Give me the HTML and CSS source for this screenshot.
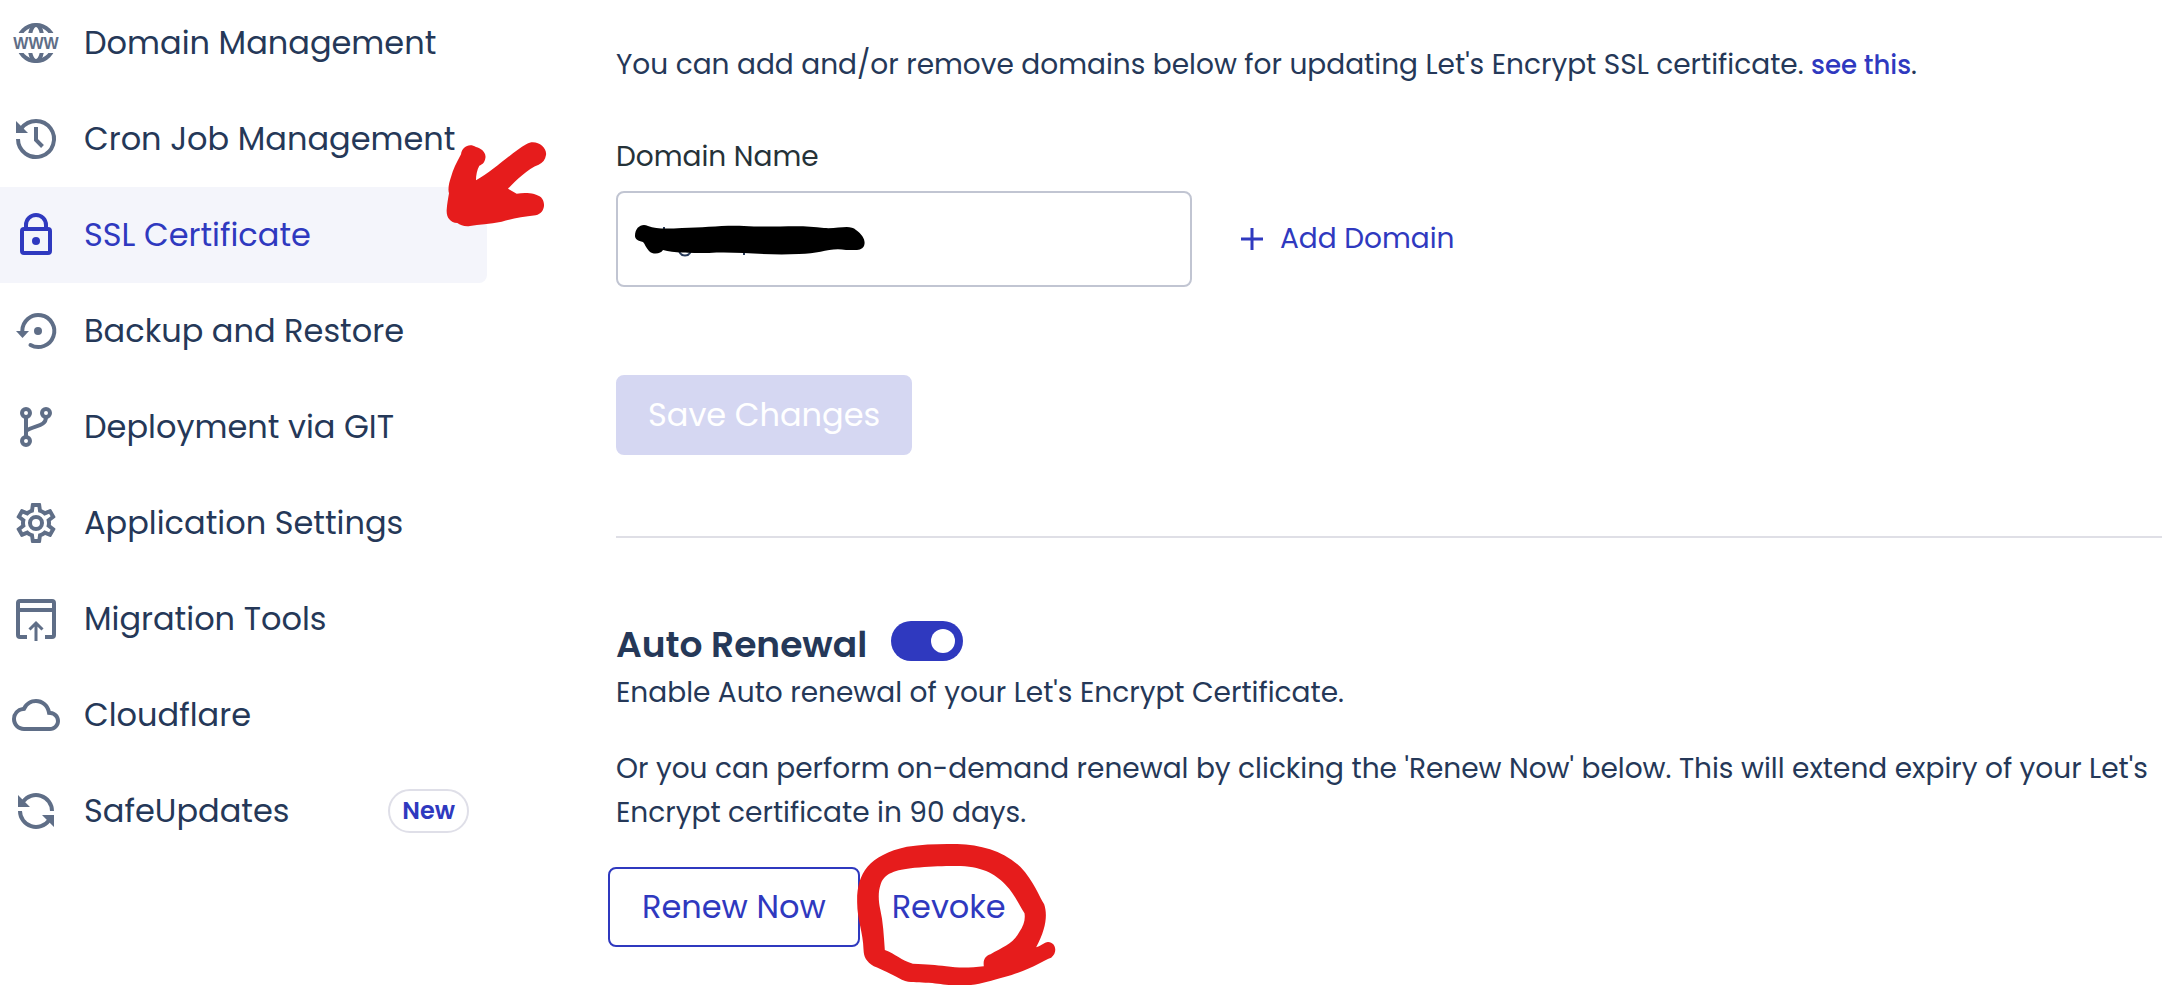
FILE: index.html
```html
<!DOCTYPE html>
<html lang="en">
<head>
<meta charset="utf-8">
<title>SSL Certificate</title>
<link rel="stylesheet" href="styles.css">
</head>
<body>
<div class="layout">
  <nav class="sidebar" aria-label="Application">
    <a class="item" href="#">
      <svg class="icon" viewBox="0 0 48 48" aria-hidden="true">
        <clipPath id="caps"><path d="M0 0H48V14H0ZM0 34H48V48H0Z"/></clipPath>
        <g clip-path="url(#caps)">
          <circle class="line" cx="24" cy="24" r="18"/>
          <ellipse class="line" cx="24" cy="24" rx="7" ry="18"/>
        </g>
        <text class="www" x="24" y="30" text-anchor="middle">WWW</text>
      </svg>
      <span>Domain Management</span>
    </a>
    <a class="item" href="#">
      <svg class="icon" viewBox="0 0 48 48" aria-hidden="true">
        <path class="line" d="M6 24A18 18 0 1 0 9.500 13.300"/>
        <path class="line" d="M24 12V25L30.500 31.500"/>
        <path class="solid" d="M4 6V18H16Z"/>
      </svg>
      <span>Cron Job Management</span>
    </a>
    <a class="item active" href="#" aria-current="page">
      <svg class="icon" viewBox="0 0 48 48" aria-hidden="true">
        <rect class="line" x="10" y="18" width="28" height="24" rx="2"/>
        <path class="line" d="M14 18V14A10 10 0 0 1 34 14V18"/>
        <circle class="solid" cx="24" cy="30" r="4"/>
      </svg>
      <span>SSL Certificate</span>
      <svg class="mark mark-arrow" viewBox="0 0 420 360" aria-hidden="true">
        <path d="M93 103C96 80 118 69 138 81C153 84 170 98 166 115C164 128 157 134 148 137C141 150 138 165 138 181C190 152 248 95 290 72C318 56 352 82 348 105C346 119 338 129 326 134C293 146 258 181 234 206L260 221C287 216 318 219 333 232C349 249 344 280 317 286C276 291 245 296 215 305C178 312 146 313 120 318C104 320 91 316 82 309C60 307 49 292 50 270C51 252 55 233 57 220C53 208 57 188 63 171C69 149 79 129 93 103Z"/>
      </svg>
    </a>
    <a class="item" href="#">
      <svg class="icon" viewBox="0 0 48 48" aria-hidden="true">
        <path class="line round" d="M10.300 25V24A16 16 0 1 1 18.500 38"/>
        <path class="solid" d="M4 24H17L10.500 31Z"/>
        <circle class="solid" cx="26" cy="24" r="4"/>
      </svg>
      <span>Backup and Restore</span>
    </a>
    <a class="item" href="#">
      <svg class="icon" viewBox="0 0 48 48" aria-hidden="true">
        <circle class="line" cx="14" cy="10" r="4"/>
        <circle class="line" cx="34" cy="10" r="4"/>
        <circle class="line" cx="14" cy="38" r="4"/>
        <path class="line" d="M14 14V34M34 14C34 24 22 22 14 28"/>
      </svg>
      <span>Deployment via GIT</span>
    </a>
    <a class="item" href="#">
      <svg class="icon" viewBox="0 0 24 24" aria-hidden="true">
        <path class="solid" d="M12,8A4,4 0 0,1 16,12A4,4 0 0,1 12,16A4,4 0 0,1 8,12A4,4 0 0,1 12,8M12,10A2,2 0 0,0 10,12A2,2 0 0,0 12,14A2,2 0 0,0 14,12A2,2 0 0,0 12,10M10,22C9.75,22 9.54,21.82 9.5,21.58L9.13,18.93C8.5,18.68 7.96,18.34 7.44,17.94L4.95,18.95C4.73,19.03 4.46,18.95 4.34,18.73L2.34,15.27C2.21,15.05 2.27,14.78 2.46,14.63L4.57,12.97L4.5,12L4.57,11L2.46,9.37C2.27,9.22 2.21,8.95 2.34,8.73L4.34,5.27C4.46,5.05 4.73,4.96 4.95,5.05L7.44,6.05C7.96,5.66 8.5,5.32 9.13,5.07L9.5,2.42C9.54,2.18 9.75,2 10,2H14C14.25,2 14.46,2.18 14.5,2.42L14.87,5.07C15.5,5.32 16.04,5.66 16.56,6.05L19.05,5.05C19.27,4.96 19.54,5.05 19.66,5.27L21.66,8.73C21.79,8.95 21.73,9.22 21.54,9.37L19.43,11L19.5,12L19.43,13L21.54,14.63C21.73,14.78 21.79,15.05 21.66,15.27L19.66,18.73C19.54,18.95 19.27,19.04 19.05,18.95L16.56,17.95C16.04,18.34 15.5,18.68 14.87,18.93L14.5,21.58C14.46,21.82 14.25,22 14,22H10M11.25,4L10.88,6.61C9.68,6.86 8.62,7.5 7.85,8.39L5.44,7.35L4.69,8.65L6.8,10.2C6.4,11.37 6.4,12.64 6.8,13.8L4.68,15.36L5.43,16.66L7.86,15.62C8.63,16.5 9.68,17.14 10.87,17.38L11.24,20H12.76L13.13,17.39C14.32,17.14 15.37,16.5 16.14,15.62L18.57,16.66L19.32,15.36L17.2,13.81C17.6,12.64 17.6,11.37 17.2,10.2L19.31,8.65L18.56,7.35L16.15,8.39C15.38,7.5 14.32,6.86 13.12,6.62L12.75,4H11.25Z"/>
      </svg>
      <span>Application Settings</span>
    </a>
    <a class="item" href="#">
      <svg class="icon" viewBox="0 0 48 48" aria-hidden="true">
        <path class="line" d="M15 42H8Q6 42 6 40V8Q6 6 8 6H40Q42 6 42 8V40Q42 42 40 42H33M6 15H42"/>
        <path class="line thin" d="M24 46V28M17.500 34.500L24 28L30.500 34.500"/>
      </svg>
      <span>Migration Tools</span>
    </a>
    <a class="item" href="#">
      <svg class="icon" viewBox="0 0 24 24" aria-hidden="true">
        <path class="solid" d="M19.35 10.04A7.49 7.49 0 0 0 12 4C9.11 4 6.6 5.64 5.35 8.04A5.994 5.994 0 0 0 0 14c0 3.31 2.69 6 6 6h13c2.76 0 5-2.24 5-5 0-2.64-2.05-4.78-4.65-4.96zM19 18H6c-2.21 0-4-1.79-4-4 0-2.05 1.53-3.76 3.56-3.97l1.07-.11.5-.95A5.469 5.469 0 0 1 12 6c2.62 0 4.88 1.86 5.39 4.43l.3 1.5 1.53.11A2.98 2.98 0 0 1 22 15c0 1.65-1.35 3-3 3z"/>
      </svg>
      <span>Cloudflare</span>
    </a>
    <a class="item" href="#">
      <svg class="icon" viewBox="0 0 48 48" aria-hidden="true">
        <path class="line" d="M40 24A16 16 0 0 0 11 14.700M8 24A16 16 0 0 0 37 33.300"/>
        <path class="solid" d="M6 8V20H18ZM42 40V28H30Z"/>
      </svg>
      <span>SafeUpdates</span>
      <span class="badge">New</span>
    </a>
  </nav>

  <main class="content">
    <p class="text">You can add and/or remove domains below for updating Let's Encrypt SSL certificate. <a class="link" href="#">see this</a>.</p>

    <form class="form">
      <label class="label" for="domain">Domain Name</label>
      <div class="row">
        <div class="field">
          <input class="input" id="domain" type="text">
          <svg class="mark mark-redact" viewBox="0 0 240 44" aria-hidden="true">
            <path class="glyph" d="M30 10V12M45 34C47 40 55 40 57 34M110 34V38"/>
            <path d="M1 19C1 10 8 6 14 9C22 12 32 12 48 11C70 11 88 8 110 9C140 11 165 7 190 11C205 12 216 7 222 13C229 18 232 24 230 29C227 34 222 33 212 33C196 30 186 37 165 37C130 39 104 34 75 36C54 36 40 36 29 33C27 37 19 38 15 34C12 31 11 27 9 25C4 24 1 22 1 19Z"/>
          </svg>
        </div>
        <button class="add" type="button">
          <svg class="plus" viewBox="0 0 24 24" aria-hidden="true"><path d="M12 1V23M1 12H23"/></svg>
          Add Domain
        </button>
      </div>
      <button class="btn save" type="submit" disabled>Save Changes</button>
    </form>

    <section class="renewal">
      <div class="heading">
        <h2 class="title" id="auto">Auto Renewal</h2>
        <input class="toggle" type="checkbox" role="switch" aria-labelledby="auto" checked>
      </div>
      <p class="text">Enable Auto renewal of your Let's Encrypt Certificate.</p>
      <p class="text ondemand">Or you can perform on-demand renewal by clicking the 'Renew Now' below. This will extend expiry of your Let's Encrypt certificate in 90 days.</p>
      <div class="actions">
        <button class="btn outline" type="button">Renew Now</button>
        <button class="btn plain" type="button">Revoke
          <svg class="mark mark-circle" viewBox="0 0 620 450" aria-hidden="true">
            <path d="M18 200C16 115 50 58 167 32C220 24 270 23 318 24C392 27 456 44 508 93C548 135 564 182 579 205C589 235 586 276 555 334C575 327 582 318 590 318C612 317 622 348 600 365C575 373 543 400 460 423C410 437 375 449 325 449C280 448 265 441 223 440C195 437 180 442 152 431C118 414 94 401 68 391C45 376 38 365 37 340C36 290 18 250 18 200ZM101 342C133 353 150 374 185 383C230 386 252 386 285 391C325 397 360 395 398 391C395 371 403 360 418 355C455 333 485 324 504 289C518 268 523 250 520 232C500 200 490 174 463 146C430 112 390 90 315 90C272 89 238 92 190 95C130 102 102 111 89 143C80 168 82 195 87 219C96 257 98 300 101 342Z"/>
          </svg>
        </button>
      </div>
    </section>
  </main>
</div>
</body>
</html>
```
FILE: styles.css
```css
* {
  box-sizing: border-box;
}

body {
  margin: 0;
  background: #fff;
  color: #253858;
  font-family: Poppins, Inter, "Open Sans", sans-serif;
  font-size: 28px;
  font-weight: 400;
  line-height: 44px;
  overflow-x: hidden;
}

.layout {
  display: grid;
  grid-template-columns: 487px minmax(0, 1fr);
  column-gap: 129px;
}

.sidebar {
  margin-top: -5px;
}

.item {
  position: relative;
  display: flex;
  align-items: center;
  gap: 24px;
  height: 96px;
  padding: 0 18px 0 12px;
  border-radius: 0 8px 8px 0;
  color: inherit;
  font-size: 32px;
  text-decoration: none;
}

.item.active {
  background: #f4f5fb;
  color: #2f39bf;
}

.icon {
  flex: none;
  width: 48px;
  height: 48px;
  color: #5f6e87;
  overflow: visible;
}

.active .icon {
  color: inherit;
}

.line {
  fill: none;
  stroke: currentColor;
  stroke-width: 4;
}

.line.thin {
  stroke-width: 3;
}

.line.round {
  stroke-linecap: round;
}

.solid {
  fill: currentColor;
}

.www {
  fill: currentColor;
  font: bold 16px "Liberation Sans", sans-serif;
}

.badge {
  margin-left: auto;
  padding: 0 12px;
  border: 2px solid #dfdfe8;
  border-radius: 22px;
  color: #2f39bf;
  font-size: 24px;
  font-weight: 600;
  line-height: 40px;
}

.content {
  padding: 43px 2px 38px 0;
}

.text {
  margin: 0;
}

.link {
  color: #2f39bf;
  font-size: 26px;
  font-weight: 500;
  text-decoration: none;
}

.form {
  padding-bottom: 81px;
  border-bottom: 2px solid #dfdfe6;
}

.label {
  display: block;
  margin-top: 48px;
  color: #263238;
}

.row {
  display: flex;
  align-items: center;
  gap: 48px;
  margin: 12px 0 88px;
}

.field {
  position: relative;
  flex: 0 1 576px;
}

.input {
  display: block;
  width: 100%;
  height: 96px;
  padding: 0 20px;
  border: 2px solid #c1c5d2;
  border-radius: 8px;
  background: #fff;
  color: inherit;
  font: inherit;
}

.add {
  display: flex;
  align-items: center;
  gap: 16px;
  padding: 0;
  border: 0;
  background: none;
  color: #2f39bf;
  font: inherit;
}

.plus {
  width: 24px;
  height: 24px;
  fill: none;
  stroke: currentColor;
  stroke-width: 3;
}

.btn {
  height: 80px;
  padding: 0 30px;
  border: 2px solid transparent;
  border-radius: 8px;
  background: none;
  color: #2f39bf;
  font: inherit;
  font-size: 32px;
}

.save {
  display: block;
  background: #d5d7f2;
  border-color: #d5d7f2;
  color: #fff;
}

.heading {
  display: flex;
  align-items: center;
  gap: 24px;
  margin-top: 81px;
}

.title {
  margin: 0;
  font-size: 36px;
  font-weight: 600;
  line-height: 52px;
}

.toggle {
  display: flex;
  align-items: center;
  justify-content: flex-end;
  appearance: none;
  width: 72px;
  height: 40px;
  margin: 0 0 8px;
  padding: 0 8px;
  border-radius: 20px;
  background: #2f39bf;
}

.toggle::before {
  content: "";
  width: 24px;
  height: 24px;
  border-radius: 50%;
  background: #fff;
}

.ondemand {
  margin-top: 32px;
}

.actions {
  display: flex;
  margin: 32px 0 0 -8px;
}

.outline {
  padding: 0 32px;
  border-color: #2f39bf;
}

.plain {
  position: relative;
}

.mark {
  position: absolute;
  overflow: visible;
  fill: #e61c1c;
  pointer-events: none;
}

.mark-arrow {
  left: 430px;
  top: -67px;
  width: 140px;
  height: 120px;
}

.mark-redact {
  left: 18px;
  top: 26px;
  width: 240px;
  height: 44px;
  fill: #000;
}

.mark .glyph {
  fill: none;
  stroke: #253858;
  stroke-width: 2;
}

.mark-circle {
  left: -11px;
  top: -33px;
  width: 207px;
  height: 150px;
}
```
